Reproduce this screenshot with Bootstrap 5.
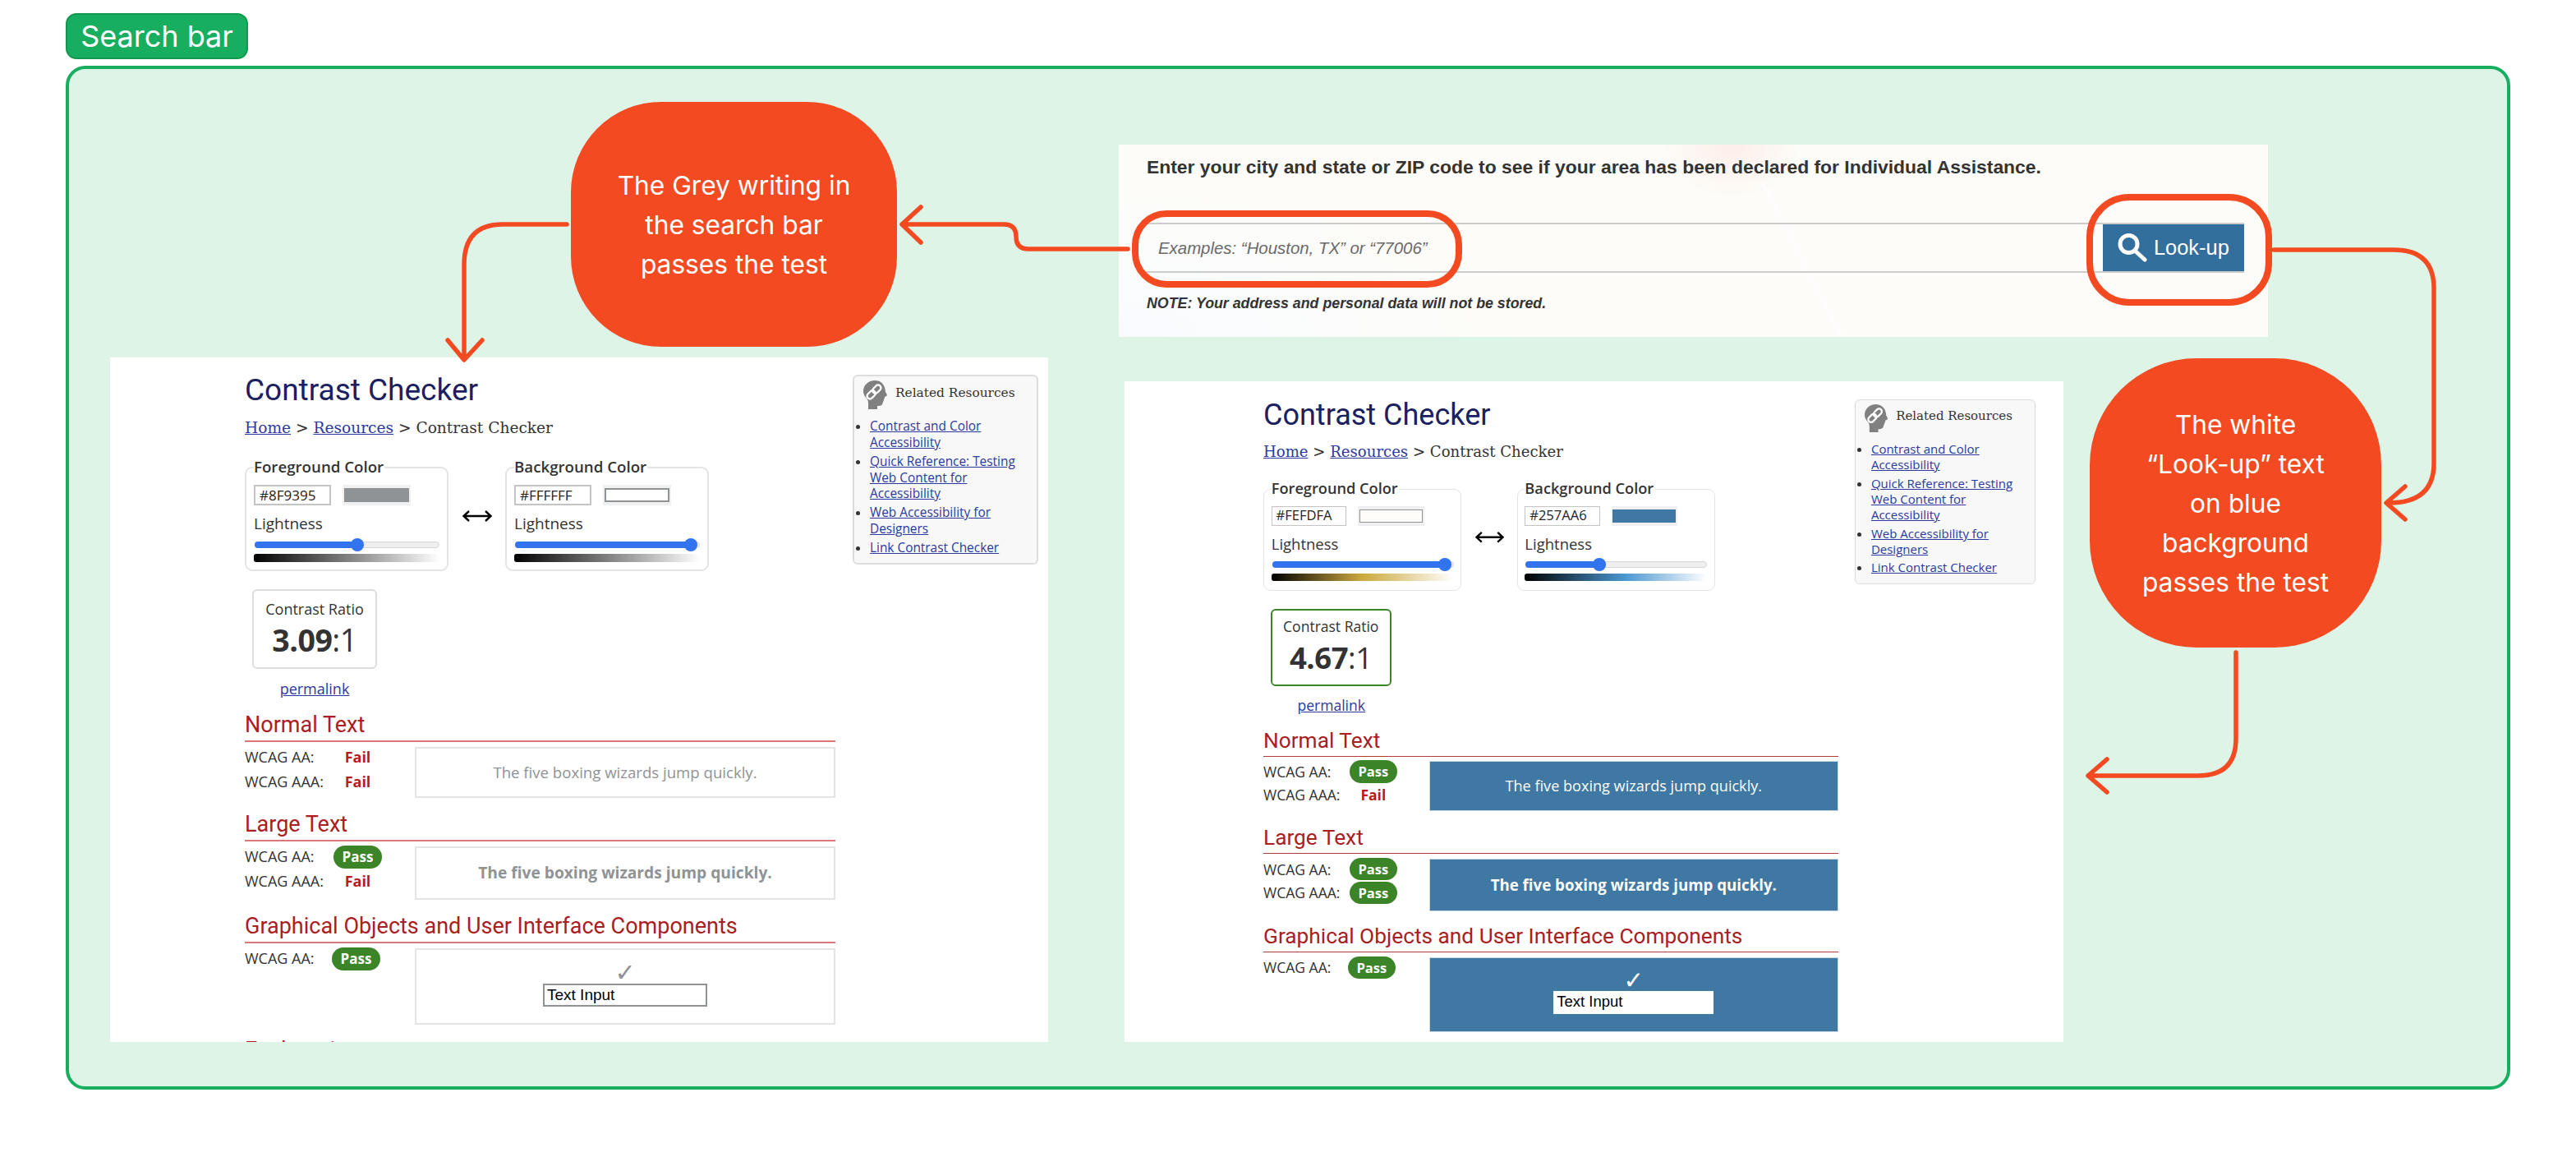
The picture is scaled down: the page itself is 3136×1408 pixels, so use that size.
<!DOCTYPE html>
<html lang="en">
<head>
    <meta charset="UTF-8">
    <title>Search bar</title>
    <link href="https://cdn.jsdelivr.net/npm/bootstrap@5.3.0/dist/css/bootstrap.min.css" rel="stylesheet">
    <style>
        body { background: #fff; font-family: "Inter", sans-serif; overflow: hidden; }
        .board { position: relative; width: 3136px; height: 1408px; padding: 16px 80px 0; }
        .tag { width: 222px; height: 56px; background: #17ae5f; border: 2px solid #12994f; border-radius: 13px; color: #fff; font-size: 36px; line-height: 1; }
        .panel { height: 1246px; margin-top: 8px; background: #ddf4e7; border: 4px solid #17ae5f; border-radius: 24px; }

        /* things placed on the free canvas */
        .bubble { position: absolute; padding-top: 2px; background: #f44a22; color: #fff; font-size: 31.7px; line-height: 48px; text-align: center; }
        .bubble-a { left: 695px; top: 124px; width: 397px; height: 298px; border-radius: 110px; }
        .bubble-b { left: 2544px; top: 436px; width: 355px; height: 352px; border-radius: 130px; }
        .ring { position: absolute; border: 8px solid #f44a22; }
        .ring-a { left: 1378px; top: 256px; width: 402px; height: 94px; border-radius: 42px; }
        .ring-b { left: 2540px; top: 236px; width: 226px; height: 136px; border-radius: 52px; }
        .wires { position: absolute; left: 0; top: 0; }
        .wires path { fill: none; stroke: #f44a22; stroke-width: 5.5; stroke-linecap: round; stroke-linejoin: round; }

        /* look-up screenshot */
        .lookup { position: absolute; left: 1362px; top: 176px; width: 1399px; height: 234px; padding: 12px 29px 0 34px; overflow: hidden; color: #333; font-family: "Liberation Sans", Arial, sans-serif;
            background: radial-gradient(ellipse 85px 65px at 746px 0, #fdeeea, transparent), radial-gradient(ellipse 500px 200px at 0 234px, #f9fbff, transparent), #fdfcf8; }
        .lookup-glare { position: absolute; left: 775px; top: 45px; }
        .lookup-title { position: relative; font-size: 22.9px; line-height: 30px; font-weight: 700; }
        .lookup-row { position: relative; height: 61px; margin: 53px 0 0 -7px; }
        .lookup-field { border: solid #ccc; border-width: 2px 0; color: #6a6a6a; font-size: 20.4px; font-style: italic; padding: 2px 0 0 21px; }
        .lookup-btn { width: 172px; background: #336f9c; border: solid #ccc; border-width: 2px 0; color: #fff; font-size: 25.4px; gap: 8px; padding-left: 18px; }
        .lookup-note { position: relative; margin-top: 25px; font-size: 17.8px; line-height: 24px; font-weight: 700; font-style: italic; }

        /* contrast checker screenshots */
        .shot { position: absolute; background: #fff; overflow: hidden; color: #333; font-family: "Open Sans", sans-serif; font-size: 18px; }
        .shot-a { left: 134px; top: 435px; width: 1142px; height: 833px; padding-left: 164px; }
        .shot-b { left: 1369px; top: 464px; width: 1143px; height: 804px; padding: 2px 0 0 169px; }
        .shot-b .cc { zoom: .9736; }
        .cc { gap: 21px; }
        .cc a { color: #2b3aa0; }
        .cc-main { width: 719px; flex: none; }
        .cc-title { margin: 18px 0 0; color: #1b2060; font: 400 37px/44px Roboto, sans-serif; }
        .cc-crumb { margin-top: 10px; font: 400 18.6px/28px "DejaVu Serif", serif; }
        .cc-pickers { margin-top: 33px; }
        .cc-field { width: 248px; height: 127px; padding: 0 9px; border: 2px solid #e4e4e4; border-radius: 9px; }
        .cc-legend { width: fit-content; margin-top: -15px; padding-right: 1px; background: #fff; font-size: 18.7px; font-weight: 600; line-height: 26px; }
        .cc-swap { width: 69px; padding-bottom: 7px; }
        .cc-hex { width: 94px; height: 25px; margin-top: 9px; padding-left: 5px; border: 2px solid #c4c4c4; color: #222; font-size: 17px; line-height: 21px; }
        .cc-swatch { width: 83px; height: 25px; margin: 9px 0 0 14px; padding: 4px 2px; background: #f0f0f0; }
        .cc-swatch span { display: block; height: 100%; border: 2px solid #8f9395; }
        .cc-light { margin-top: 10px; font-size: 19px; line-height: 24px; }
        .cc-track { position: relative; height: 8px; margin: 10px 0 0 1px; background: #efefef; border: 1px solid #d6d6d6; border-radius: 4px; }
        .cc-fill { position: relative; height: 8px; margin: -1px; background: #3273f0; border-radius: 4px; }
        .cc-fill::after { content: ""; position: absolute; right: -8px; top: -4px; width: 16px; height: 16px; background: #3273f0; border-radius: 50%; }
        .cc-ramp { height: 10px; margin-top: 7px; border-radius: 3px; }
        .ramp-grey { background: linear-gradient(90deg, #000, #fff); }
        .ramp-gold { background: linear-gradient(90deg, #000, #cda93f 50%, #fff); }
        .ramp-blue { background: linear-gradient(90deg, #000, #4b97d1 55%, #fff); }
        .cc-ratio { width: 152px; margin: 22px 0 0 9px; }
        .cc-ratio-box { height: 97px; padding-top: 10px; border: 2px solid #ddd; border-radius: 6px; line-height: 24px; }
        .cc-ratio-ok { border: 3px solid #3b8427; padding-top: 9px; width: 151px; }
        .cc-ratio-num { margin-top: 3px; font-size: 37.5px; line-height: 46px; letter-spacing: -.5px; }
        .cc-perma { margin-top: 12px; line-height: 24px; }
        .cc-head { margin: 15px 0 0; padding-bottom: 2px; border-bottom: 2px solid #d9777a; color: #a8201f; font: 400 27px/34px Roboto, sans-serif; }
        .cc-head-cut { margin-top: 14px; border: 0; }
        .shot-b .cc-head { border-bottom-color: #b23b3b; }
        .shot-b .cc-head-gap { margin-top: 17px; }
        .cc-result { margin-top: 6px; }
        .cc-scores { width: 207px; margin-top: -2px; flex: none; }
        .cc-score { height: 29.5px; }
        .cc-lab { width: 108px; flex: none; }
        .cc-lab-sm { width: 106px; }
        .cc-val { width: 59px; text-align: center; }
        .cc-fail { color: #b71c1c; font-weight: 700; }
        .cc-pass { display: block; height: 28px; padding: 0; background: #3b8427; color: #fff; font-size: 17px; font-weight: 700; line-height: 28px; }
        .cc-sample { flex: 1; border: 2px solid #e4e4e4; color: #8f9395; font-size: 18.6px; }
        .cc-sample-big { font-size: 19.2px; font-weight: 700; }
        .cc-sample-ui { padding-bottom: 7px; }
        .cc-blue { background: #3f78a3; border-color: #c9d8e4; color: #fefdfa; }
        .cc-check { font-family: "DejaVu Sans", sans-serif; font-size: 30px; line-height: 28px; }
        .cc-input { width: 200px; height: 28px; margin-top: -1px; padding-left: 3px; background: #fff; border: 2px solid #8f9395; color: #000; font-family: "Liberation Sans", sans-serif; font-size: 19px; line-height: 24px; }
        .cc-input-flat { border-color: #fff; }
        .cc-aside { width: 226px; height: 231px; margin-top: 21px; padding: 5px 6px 0 11px; background: #f8f8f8; border: 2px solid #ddd; border-radius: 6px; flex: none; }
        .cc-aside-title { gap: 10px; font: 400 15.4px/20px "DejaVu Serif", serif; }
        .cc-aside-title span { margin-top: 5px; }
        .cc-aside ul { margin: 11px 0 0; padding-left: 8px; font-size: 15.4px; line-height: 19.7px; }
        .cc-aside li { margin-bottom: 3.4px; }
    </style>
</head>
<body>
<div class="board">
    <div class="tag d-flex align-items-center justify-content-center">Search bar</div>
    <div class="panel"></div>

    <!-- left screenshot -->
    <div class="shot shot-a">
        <div class="cc d-flex align-items-start">
            <div class="cc-main">
                <h1 class="cc-title">Contrast Checker</h1>
                <div class="cc-crumb"><a href="#">Home</a> &gt; <a href="#">Resources</a> &gt; Contrast Checker</div>
                <div class="cc-pickers d-flex">
                    <div class="cc-field">
                        <div class="cc-legend">Foreground Color</div>
                        <div class="d-flex"><div class="cc-hex">#8F9395</div><div class="cc-swatch"><span style="background:#8f9395"></span></div></div>
                        <div class="cc-light">Lightness</div>
                        <div class="cc-track"><div class="cc-fill" style="width:56%"></div></div>
                        <div class="cc-ramp ramp-grey"></div>
                    </div>
                    <div class="cc-swap d-flex justify-content-center align-items-center">
                        <svg width="36" height="16" viewBox="0 0 36 16"><path d="M1 8H35M8 2L1.5 8L8 14M28 2L34.5 8L28 14" fill="none" stroke="#000" stroke-width="2.4"/></svg>
                    </div>
                    <div class="cc-field">
                        <div class="cc-legend">Background Color</div>
                        <div class="d-flex"><div class="cc-hex">#FFFFFF</div><div class="cc-swatch"><span style="background:#fff"></span></div></div>
                        <div class="cc-light">Lightness</div>
                        <div class="cc-track"><div class="cc-fill" style="width:96%"></div></div>
                        <div class="cc-ramp ramp-grey"></div>
                    </div>
                </div>
                <div class="cc-ratio text-center">
                    <div class="cc-ratio-box">Contrast Ratio<div class="cc-ratio-num"><b>3.09</b>:1</div></div>
                    <div class="cc-perma"><a href="#">permalink</a></div>
                </div>
                <h2 class="cc-head">Normal Text</h2>
                <div class="cc-result d-flex">
                    <div class="cc-scores">
                        <div class="cc-score d-flex align-items-center"><div class="cc-lab">WCAG AA:</div><div class="cc-val cc-fail">Fail</div></div>
                        <div class="cc-score d-flex align-items-center"><div class="cc-lab">WCAG AAA:</div><div class="cc-val cc-fail">Fail</div></div>
                    </div>
                    <div class="cc-sample d-flex align-items-center justify-content-center" style="height:62px">The five boxing wizards jump quickly.</div>
                </div>
                <h2 class="cc-head cc-head-gap">Large Text</h2>
                <div class="cc-result d-flex">
                    <div class="cc-scores">
                        <div class="cc-score d-flex align-items-center"><div class="cc-lab">WCAG AA:</div><div class="cc-val"><span class="badge rounded-pill cc-pass">Pass</span></div></div>
                        <div class="cc-score d-flex align-items-center"><div class="cc-lab">WCAG AAA:</div><div class="cc-val cc-fail">Fail</div></div>
                    </div>
                    <div class="cc-sample cc-sample-big d-flex align-items-center justify-content-center" style="height:65px">The five boxing wizards jump quickly.</div>
                </div>
                <h2 class="cc-head">Graphical Objects and User Interface Components</h2>
                <div class="cc-result d-flex">
                    <div class="cc-scores">
                        <div class="cc-score d-flex align-items-center"><div class="cc-lab cc-lab-sm">WCAG AA:</div><div class="cc-val"><span class="badge rounded-pill cc-pass">Pass</span></div></div>
                    </div>
                    <div class="cc-sample cc-sample-ui d-flex flex-column align-items-center justify-content-center" style="height:93px">
                        <div class="cc-check">&#10003;</div>
                        <div class="cc-input">Text Input</div>
                    </div>
                </div>
                <h2 class="cc-head cc-head-cut">Explanation</h2>
            </div>
            <div class="cc-aside">
                <div class="cc-aside-title d-flex align-items-start">
                    <svg width="29" height="35" viewBox="0 0 29 35"><path d="M14 0C6 0 0 6 0 13C0 17 2 20 4 22C6 24 6 26 6 30V35H17V31C19 31 22 31 23 29C24 27 24 25 25 24C25 22 26 22 26 20C30 19 29 17 27 14C27 12 26 0 14 0Z" fill="#808080"/><g fill="none" stroke="#fff" stroke-width="2.4" transform="rotate(-45 13 14)"><rect x="2.5" y="10.5" width="11.5" height="7" rx="3.5"/><rect x="12" y="10.5" width="11.5" height="7" rx="3.5"/></g></svg>
                    <span>Related Resources</span>
                </div>
                <ul>
                    <li><a href="#">Contrast and Color Accessibility</a></li>
                    <li><a href="#">Quick Reference: Testing Web Content for Accessibility</a></li>
                    <li><a href="#">Web Accessibility for Designers</a></li>
                    <li><a href="#">Link Contrast Checker</a></li>
                </ul>
            </div>
        </div>
    </div>

    <!-- right screenshot -->
    <div class="shot shot-b">
        <div class="cc d-flex align-items-start">
            <div class="cc-main">
                <h1 class="cc-title">Contrast Checker</h1>
                <div class="cc-crumb"><a href="#">Home</a> &gt; <a href="#">Resources</a> &gt; Contrast Checker</div>
                <div class="cc-pickers d-flex">
                    <div class="cc-field">
                        <div class="cc-legend">Foreground Color</div>
                        <div class="d-flex"><div class="cc-hex">#FEFDFA</div><div class="cc-swatch"><span style="background:#fefdfa"></span></div></div>
                        <div class="cc-light">Lightness</div>
                        <div class="cc-track"><div class="cc-fill" style="width:96%"></div></div>
                        <div class="cc-ramp ramp-gold"></div>
                    </div>
                    <div class="cc-swap d-flex justify-content-center align-items-center">
                        <svg width="36" height="16" viewBox="0 0 36 16"><path d="M1 8H35M8 2L1.5 8L8 14M28 2L34.5 8L28 14" fill="none" stroke="#000" stroke-width="2.4"/></svg>
                    </div>
                    <div class="cc-field">
                        <div class="cc-legend">Background Color</div>
                        <div class="d-flex"><div class="cc-hex">#257AA6</div><div class="cc-swatch"><span style="background:#3f78a3;border-color:#3f78a3"></span></div></div>
                        <div class="cc-light">Lightness</div>
                        <div class="cc-track"><div class="cc-fill" style="width:41%"></div></div>
                        <div class="cc-ramp ramp-blue"></div>
                    </div>
                </div>
                <div class="cc-ratio text-center">
                    <div class="cc-ratio-box cc-ratio-ok">Contrast Ratio<div class="cc-ratio-num"><b>4.67</b>:1</div></div>
                    <div class="cc-perma"><a href="#">permalink</a></div>
                </div>
                <h2 class="cc-head">Normal Text</h2>
                <div class="cc-result d-flex">
                    <div class="cc-scores">
                        <div class="cc-score d-flex align-items-center"><div class="cc-lab">WCAG AA:</div><div class="cc-val"><span class="badge rounded-pill cc-pass">Pass</span></div></div>
                        <div class="cc-score d-flex align-items-center"><div class="cc-lab">WCAG AAA:</div><div class="cc-val cc-fail">Fail</div></div>
                    </div>
                    <div class="cc-sample cc-blue d-flex align-items-center justify-content-center" style="height:62px">The five boxing wizards jump quickly.</div>
                </div>
                <h2 class="cc-head cc-head-gap">Large Text</h2>
                <div class="cc-result d-flex">
                    <div class="cc-scores">
                        <div class="cc-score d-flex align-items-center"><div class="cc-lab">WCAG AA:</div><div class="cc-val"><span class="badge rounded-pill cc-pass">Pass</span></div></div>
                        <div class="cc-score d-flex align-items-center"><div class="cc-lab">WCAG AAA:</div><div class="cc-val"><span class="badge rounded-pill cc-pass">Pass</span></div></div>
                    </div>
                    <div class="cc-sample cc-sample-big cc-blue d-flex align-items-center justify-content-center" style="height:65px">The five boxing wizards jump quickly.</div>
                </div>
                <h2 class="cc-head">Graphical Objects and User Interface Components</h2>
                <div class="cc-result d-flex">
                    <div class="cc-scores">
                        <div class="cc-score d-flex align-items-center"><div class="cc-lab cc-lab-sm">WCAG AA:</div><div class="cc-val"><span class="badge rounded-pill cc-pass">Pass</span></div></div>
                    </div>
                    <div class="cc-sample cc-sample-ui cc-blue d-flex flex-column align-items-center justify-content-center" style="height:93px">
                        <div class="cc-check">&#10003;</div>
                        <div class="cc-input cc-input-flat">Text Input</div>
                    </div>
                </div>
            </div>
            <div class="cc-aside">
                <div class="cc-aside-title d-flex align-items-start">
                    <svg width="29" height="35" viewBox="0 0 29 35"><path d="M14 0C6 0 0 6 0 13C0 17 2 20 4 22C6 24 6 26 6 30V35H17V31C19 31 22 31 23 29C24 27 24 25 25 24C25 22 26 22 26 20C30 19 29 17 27 14C27 12 26 0 14 0Z" fill="#808080"/><g fill="none" stroke="#fff" stroke-width="2.4" transform="rotate(-45 13 14)"><rect x="2.5" y="10.5" width="11.5" height="7" rx="3.5"/><rect x="12" y="10.5" width="11.5" height="7" rx="3.5"/></g></svg>
                    <span>Related Resources</span>
                </div>
                <ul>
                    <li><a href="#">Contrast and Color Accessibility</a></li>
                    <li><a href="#">Quick Reference: Testing Web Content for Accessibility</a></li>
                    <li><a href="#">Web Accessibility for Designers</a></li>
                    <li><a href="#">Link Contrast Checker</a></li>
                </ul>
            </div>
        </div>
    </div>

    <!-- search bar screenshot -->
    <div class="lookup">
        <svg class="lookup-glare" width="120" height="200" viewBox="0 0 120 200"><path d="M8 0L106 190" stroke="#fff" stroke-width="6" opacity=".55"/></svg>
        <div class="lookup-title">Enter your city and state or ZIP code to see if your area has been declared for Individual Assistance.</div>
        <div class="lookup-row d-flex">
            <div class="lookup-field flex-grow-1 d-flex align-items-center">Examples: &ldquo;Houston, TX&rdquo; or &ldquo;77006&rdquo;</div>
            <div class="lookup-btn d-flex align-items-center">
                <svg width="36" height="36" viewBox="0 0 36 36"><circle cx="13.5" cy="13" r="10.5" fill="none" stroke="#fff" stroke-width="5"/><path d="M21 21L33 32" stroke="#fff" stroke-width="5" stroke-linecap="round"/></svg>
                <span>Look-up</span>
            </div>
        </div>
        <div class="lookup-note">NOTE: Your address and personal data will not be stored.</div>
    </div>

    <div class="ring ring-a"></div>
    <div class="ring ring-b"></div>

    <div class="bubble bubble-a d-flex align-items-center justify-content-center"><div>The Grey writing in<br>the search bar<br>passes the test</div></div>
    <div class="bubble bubble-b d-flex align-items-center justify-content-center"><div>The white<br>&ldquo;Look-up&rdquo; text<br>on blue<br>background<br>passes the test</div></div>

    <svg class="wires" width="3136" height="1408" viewBox="0 0 3136 1408">
        <path d="M690 273H612Q565 273 565 322V436M545 414L565 438L587 414"/>
        <path d="M1373 303H1252Q1237 303 1237 288Q1237 273 1222 273H1099M1121 252L1098 273L1121 295"/>
        <path d="M2768 304H2914Q2963 304 2963 351V564Q2963 612 2908 612M2928 592L2905 612L2928 632"/>
        <path d="M2722 794V899Q2722 944 2676 944H2544M2565 924L2542 944L2565 964"/>
    </svg>
</div>
<script src="https://cdn.jsdelivr.net/npm/bootstrap@5.3.0/dist/js/bootstrap.bundle.min.js"></script>
</body>
</html>
